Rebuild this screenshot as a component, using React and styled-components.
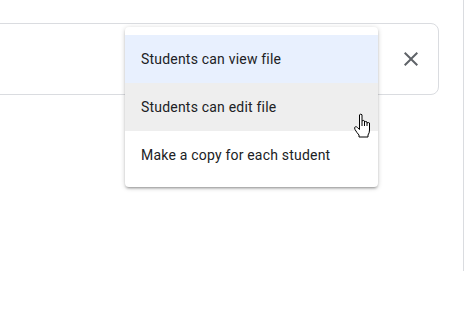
import React from "react";
import styled, { createGlobalStyle } from "styled-components";

const GlobalStyle = createGlobalStyle`
  html, body { margin: 0; padding: 0; background: #fff; }
  body { font-family: Roboto, "Noto Sans", Arial, sans-serif; overflow: hidden; }
`;

const Page = styled.div`
  width: 465px;
  height: 336px;
  display: flex;
  overflow: hidden;
`;

const Main = styled.div`
  position: relative;
  width: 464px;
  height: 271px;
  box-sizing: border-box;
  border-right: 1px solid #dadce0;
  padding-top: 23px;
`;

const Card = styled.div`
  box-sizing: border-box;
  height: 72px;
  margin-left: -20px;
  margin-right: 24px;
  border: 1px solid #dadce0;
  border-radius: 8px;
  display: flex;
  align-items: center;
  justify-content: flex-end;
  padding-right: 7px;
`;

const CloseButton = styled.button`
  width: 40px;
  height: 40px;
  border: none;
  background: transparent;
  padding: 0;
  display: flex;
  align-items: center;
  justify-content: center;
  color: #5f6368;
`;

const Menu = styled.ul`
  position: absolute;
  left: 125px;
  top: 27px;
  width: 253px;
  margin: 0;
  padding: 8px 0;
  list-style: none;
  background: #fff;
  border-radius: 4px;
  box-shadow: 0 2px 2px 0 rgba(0,0,0,0.14), 0 3px 1px -2px rgba(0,0,0,0.12), 0 1px 5px 0 rgba(0,0,0,0.2);
`;

const MenuItem = styled.li`
  height: 48px;
  padding: 0 16px;
  display: flex;
  align-items: center;
  font-size: 14px;
  color: #202124;
  letter-spacing: 0.2px;
  padding-bottom: 1px;
  box-sizing: border-box;
  background: ${(p) => p.$bg || "transparent"};
`;

const Cursor = styled.svg`
  position: absolute;
  left: 353px;
  top: 113px;
`;

export default function App() {
  return (
    <>
      <GlobalStyle />
      <Page>
        <Main>
          <Card>
            <CloseButton aria-label="Close">
              <svg width="24" height="24" viewBox="0 0 24 24">
                <path
                  d="M19 6.41 17.59 5 12 10.59 6.41 5 5 6.41 10.59 12 5 17.59 6.41 19 12 13.41 17.59 19 19 17.59 13.41 12z"
                  fill="currentColor"
                />
              </svg>
            </CloseButton>
          </Card>
          <Menu>
            <MenuItem $bg="#e8f0fe">Students can view file</MenuItem>
            <MenuItem $bg="#eeeeee">Students can edit file</MenuItem>
            <MenuItem>Make a copy for each student</MenuItem>
          </Menu>
          <Cursor width="19" height="25" viewBox="0 0 19 25">
            <path
              d="M6.5 1.8 Q7.75 0.5 9 1.8 L9 8 Q10.25 6.8 11.5 8 L11.5 9 Q12.75 8 14 9 L14 10 Q15.25 9 16.5 10 L16.5 17 Q16.5 20 15 22 L15 24 L6 24 L6 22 Q4 20 2 16.5 Q1 14.5 2.3 13.8 Q3.5 13.4 4.5 14.6 L6.5 16.5 Z"
              fill="#fff"
              stroke="#000"
              strokeWidth="1"
              strokeLinejoin="round"
            />
            <path d="M9 8 L9 13 M11.5 9 L11.5 13 M14 10 L14 13" stroke="#000" strokeWidth="1" />
          </Cursor>
        </Main>
      </Page>
    </>
  );
}
